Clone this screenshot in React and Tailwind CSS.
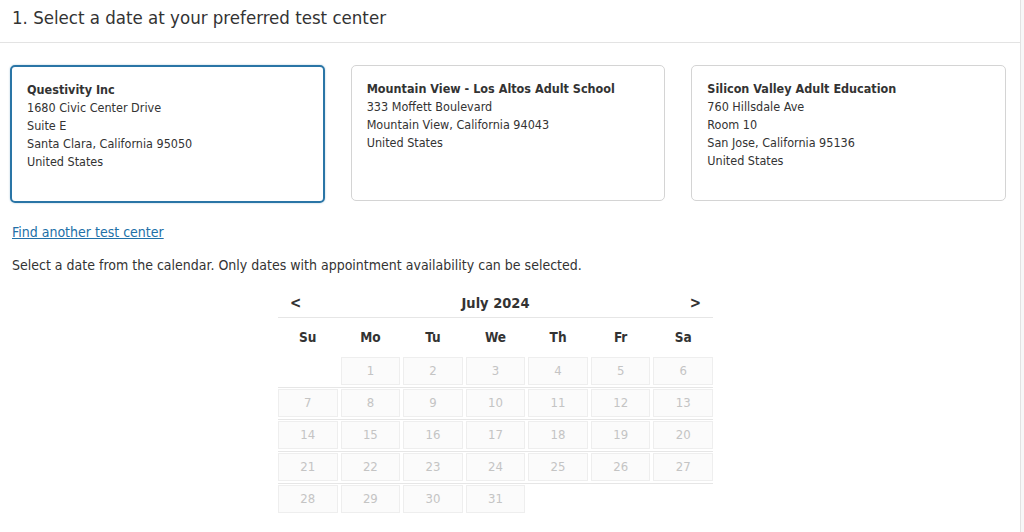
import React from 'react';

const centers = [
  {
    name: 'Questivity Inc',
    lines: ['1680 Civic Center Drive', 'Suite E', 'Santa Clara, California 95050', 'United States'],
    selected: true,
  },
  {
    name: 'Mountain View - Los Altos Adult School',
    lines: ['333 Moffett Boulevard', 'Mountain View, California 94043', 'United States'],
  },
  {
    name: 'Silicon Valley Adult Education',
    lines: ['760 Hillsdale Ave', 'Room 10', 'San Jose, California 95136', 'United States'],
  },
];

const days = ['Su', 'Mo', 'Tu', 'We', 'Th', 'Fr', 'Sa'];

// July 2024 starts on a Monday
const weeks = [
  [null, 1, 2, 3, 4, 5, 6],
  [7, 8, 9, 10, 11, 12, 13],
  [14, 15, 16, 17, 18, 19, 20],
  [21, 22, 23, 24, 25, 26, 27],
  [28, 29, 30, 31, null, null, null],
];

function CenterCard({ center }) {
  return (
    <div
      className={
        center.selected
          ? 'h-[138px] rounded-[5px] border-2 border-[#2a75a6] px-[15px] pt-[14px] shadow-[0_0_2px_rgba(42,117,166,0.4)]'
          : 'h-[136px] rounded-[5px] border border-[#d4d4d4] px-[15px] pt-[14px]'
      }
    >
      <div className="font-bold leading-[18px]">{center.name}</div>
      {center.lines.map((l) => (
        <div key={l} className="leading-[18px]">{l}</div>
      ))}
    </div>
  );
}

export default function App() {
  return (
    <div
      className="flex min-h-[532px] bg-white text-[#333]"
      style={{ fontFamily: '"DejaVu Sans Condensed", Tahoma, "DejaVu Sans", sans-serif' }}
    >
      <div className="flex-1">
        <div className="h-[43px] border-b border-[#e3e3e3] pl-[12px] pt-[7px] text-[18.5px] leading-[22px] text-[#333]">
          1. Select a date at your preferred test center
        </div>

        <div className="grid grid-cols-3 gap-[26px] pl-[10px] pr-[14px] pt-[22px] text-[12.5px]">
          {centers.map((c) => (
            <CenterCard key={c.name} center={c} />
          ))}
        </div>

        <div className="pl-[12px] pt-[19px] text-[14px]">
          <a href="#" className="text-[#2170a8] underline leading-[18px]">
            Find another test center
          </a>
          <p className="mt-[13px] leading-[18px]">
            Select a date from the calendar. Only dates with appointment availability can be selected.
          </p>
        </div>

        <div className="ml-[278px] mt-[20px] w-[435px] text-[13px]">
          <div className="flex h-[24px] items-center justify-between border-b border-[#e6e6e6] px-[12px] pb-[4px]">
            <span className="text-[15px] font-bold">&lt;</span>
            <span className="text-[14.5px] font-bold">July 2024</span>
            <span className="text-[15px] font-bold">&gt;</span>
          </div>
          <div className="grid h-[38px] grid-cols-7 items-center gap-[3px] text-[13.5px]">
            {days.map((d) => (
              <div key={d} className="text-center font-bold">{d}</div>
            ))}
          </div>
          {weeks.map((w, i) => (
            <div
              key={i}
              className={
                'grid grid-cols-7 gap-[3px] pb-[2px] pt-[1px] ' +
                (i < 4 ? 'border-b border-[#e6e6e6]' : '')
              }
            >
              {w.map((n, j) =>
                n ? (
                  <div
                    key={j}
                    className="flex h-[28px] items-center justify-center border border-[#eeeeee] bg-[#fbfbfb] text-[#c4c4c4]"
                  >
                    {n}
                  </div>
                ) : (
                  <div key={j} className="h-[28px]" />
                )
              )}
            </div>
          ))}
        </div>
      </div>
      <div className="w-[4px] border-l border-[#e2e2e2] bg-[#f7f7f7]" />
    </div>
  );
}
